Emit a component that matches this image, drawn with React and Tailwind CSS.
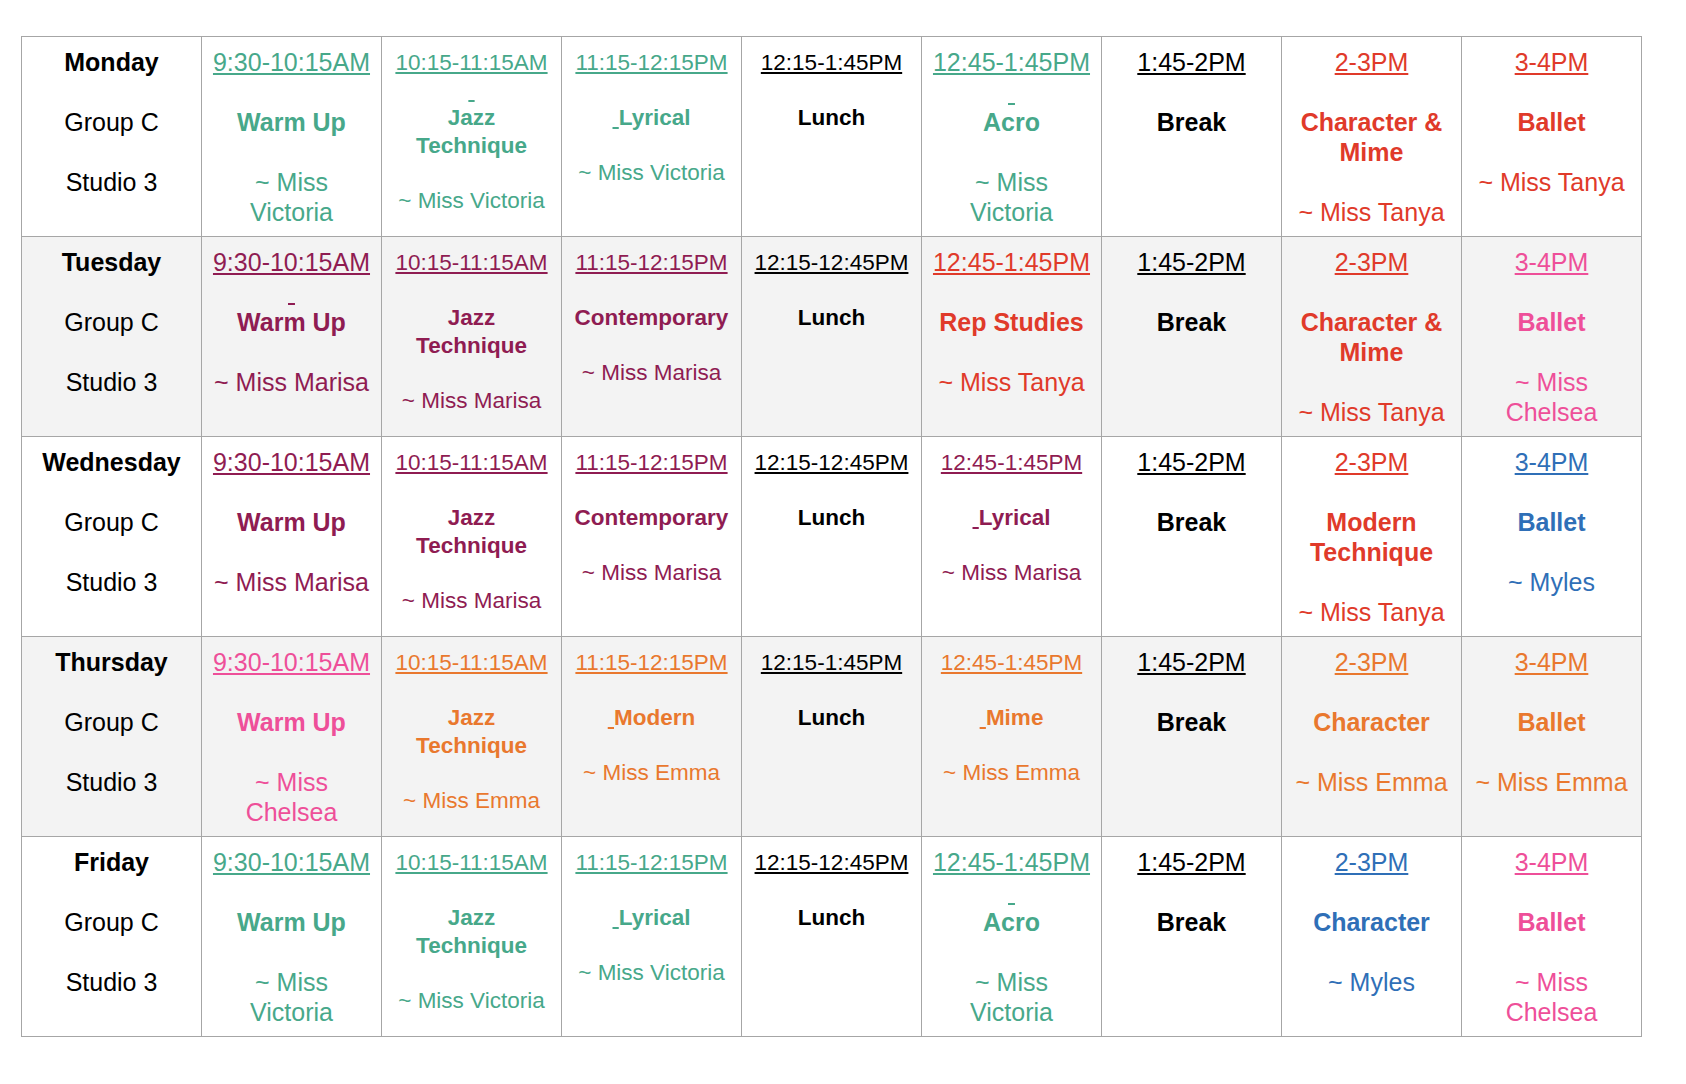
const COLORS = {
  green: 'text-[#47a88a]',
  red: 'text-[#e03a2a]',
  maroon: 'text-[#8f1c52]',
  pink: 'text-[#ee4f99]',
  blue: 'text-[#2f6fb7]',
  orange: 'text-[#e9782e]',
  black: 'text-black',
}

const SIZES = {
  lg: 'text-[25px] leading-[30px] pt-[10px]',
  sm: 'text-[22.5px] leading-[27.5px] pt-[12px]',
}

const lunch = (time) => ({ color: 'black', size: 'sm', time, title: 'Lunch' })
const brk = { color: 'black', size: 'lg', time: '1:45-2PM', title: 'Break' }

const rows = [
  {
    day: 'Monday',
    cells: [
      { color: 'green', size: 'lg', time: '9:30-10:15AM', title: 'Warm Up', teacher: '~ Miss Victoria' },
      { color: 'green', size: 'sm', time: '10:15-11:15AM', dash: true, title: 'Jazz Technique', teacher: '~ Miss Victoria' },
      { color: 'green', size: 'sm', time: '11:15-12:15PM', pre: true, title: 'Lyrical', teacher: '~ Miss Victoria' },
      lunch('12:15-1:45PM'),
      { color: 'green', size: 'lg', time: '12:45-1:45PM', dash: true, title: 'Acro', teacher: '~ Miss Victoria' },
      brk,
      { color: 'red', size: 'lg', time: '2-3PM', title: 'Character & Mime', teacher: '~ Miss Tanya' },
      { color: 'red', size: 'lg', time: '3-4PM', title: 'Ballet', teacher: '~ Miss Tanya' },
    ],
  },
  {
    day: 'Tuesday',
    cells: [
      { color: 'maroon', size: 'lg', time: '9:30-10:15AM', dash: true, title: 'Warm Up', teacher: '~ Miss Marisa' },
      { color: 'maroon', size: 'sm', time: '10:15-11:15AM', title: 'Jazz Technique', teacher: '~ Miss Marisa' },
      { color: 'maroon', size: 'sm', time: '11:15-12:15PM', title: 'Contemporary', teacher: '~ Miss Marisa' },
      lunch('12:15-12:45PM'),
      { color: 'red', size: 'lg', time: '12:45-1:45PM', title: 'Rep Studies', teacher: '~ Miss Tanya' },
      brk,
      { color: 'red', size: 'lg', time: '2-3PM', title: 'Character & Mime', teacher: '~ Miss Tanya' },
      { color: 'pink', size: 'lg', time: '3-4PM', title: 'Ballet', teacher: '~ Miss Chelsea' },
    ],
  },
  {
    day: 'Wednesday',
    cells: [
      { color: 'maroon', size: 'lg', time: '9:30-10:15AM', title: 'Warm Up', teacher: '~ Miss Marisa' },
      { color: 'maroon', size: 'sm', time: '10:15-11:15AM', title: 'Jazz Technique', teacher: '~ Miss Marisa' },
      { color: 'maroon', size: 'sm', time: '11:15-12:15PM', title: 'Contemporary', teacher: '~ Miss Marisa' },
      lunch('12:15-12:45PM'),
      { color: 'maroon', size: 'sm', time: '12:45-1:45PM', pre: true, title: 'Lyrical', teacher: '~ Miss Marisa' },
      brk,
      { color: 'red', size: 'lg', time: '2-3PM', title: 'Modern Technique', teacher: '~ Miss Tanya' },
      { color: 'blue', size: 'lg', time: '3-4PM', title: 'Ballet', teacher: '~ Myles' },
    ],
  },
  {
    day: 'Thursday',
    cells: [
      { color: 'pink', size: 'lg', time: '9:30-10:15AM', title: 'Warm Up', teacher: '~ Miss Chelsea' },
      { color: 'orange', size: 'sm', time: '10:15-11:15AM', title: 'Jazz Technique', teacher: '~ Miss Emma' },
      { color: 'orange', size: 'sm', time: '11:15-12:15PM', pre: true, title: 'Modern', teacher: '~ Miss Emma' },
      lunch('12:15-1:45PM'),
      { color: 'orange', size: 'sm', time: '12:45-1:45PM', pre: true, title: 'Mime', teacher: '~ Miss Emma' },
      brk,
      { color: 'orange', size: 'lg', time: '2-3PM', title: 'Character', teacher: '~ Miss Emma' },
      { color: 'orange', size: 'lg', time: '3-4PM', title: 'Ballet', teacher: '~ Miss Emma' },
    ],
  },
  {
    day: 'Friday',
    cells: [
      { color: 'green', size: 'lg', time: '9:30-10:15AM', title: 'Warm Up', teacher: '~ Miss Victoria' },
      { color: 'green', size: 'sm', time: '10:15-11:15AM', title: 'Jazz Technique', teacher: '~ Miss Victoria' },
      { color: 'green', size: 'sm', time: '11:15-12:15PM', pre: true, title: 'Lyrical', teacher: '~ Miss Victoria' },
      lunch('12:15-12:45PM'),
      { color: 'green', size: 'lg', time: '12:45-1:45PM', dash: true, title: 'Acro', teacher: '~ Miss Victoria' },
      brk,
      { color: 'blue', size: 'lg', time: '2-3PM', title: 'Character', teacher: '~ Myles' },
      { color: 'pink', size: 'lg', time: '3-4PM', title: 'Ballet', teacher: '~ Miss Chelsea' },
    ],
  },
]

// a stray underlined space, as left in the source doc
const Dash = () => <span className="underline">{'\u00a0'}</span>

function Blank({ dash }) {
  return <div>{dash ? <Dash /> : '\u00a0'}</div>
}

function Cell({ cell, grey }) {
  return (
    <div
      className={`h-[200px] border-r border-b border-[#a6a6a6] px-[10px] text-center ${
        grey ? 'bg-[#f3f3f3]' : 'bg-white'
      } ${COLORS[cell.color]} ${SIZES[cell.size]}`}
    >
      <div className="underline">{cell.time}</div>
      <Blank dash={cell.dash} />
      <div className="font-bold">
        {cell.pre && <Dash />}
        {cell.title}
      </div>
      {cell.teacher && (
        <>
          <Blank />
          <div>{cell.teacher}</div>
        </>
      )}
    </div>
  )
}

export default function App() {
  return (
    <div className="min-h-screen bg-white pt-[36px] pl-[21px] font-['Liberation_Sans',Arial,sans-serif]">
      <div className="grid w-fit grid-cols-[repeat(9,180px)] border-t border-l border-[#a6a6a6]">
        {rows.map((row, i) => {
          const grey = i % 2 === 1
          return [
            <div
              key={row.day}
              className={`h-[200px] border-r border-b border-[#a6a6a6] px-[10px] pt-[10px] text-center text-[25px] leading-[30px] text-black ${
                grey ? 'bg-[#f3f3f3]' : 'bg-white'
              }`}
            >
              <div className="font-bold">{row.day}</div>
              <Blank />
              <div>Group C</div>
              <Blank />
              <div>Studio 3</div>
            </div>,
            ...row.cells.map((cell, j) => <Cell key={row.day + j} cell={cell} grey={grey} />),
          ]
        })}
      </div>
    </div>
  )
}
